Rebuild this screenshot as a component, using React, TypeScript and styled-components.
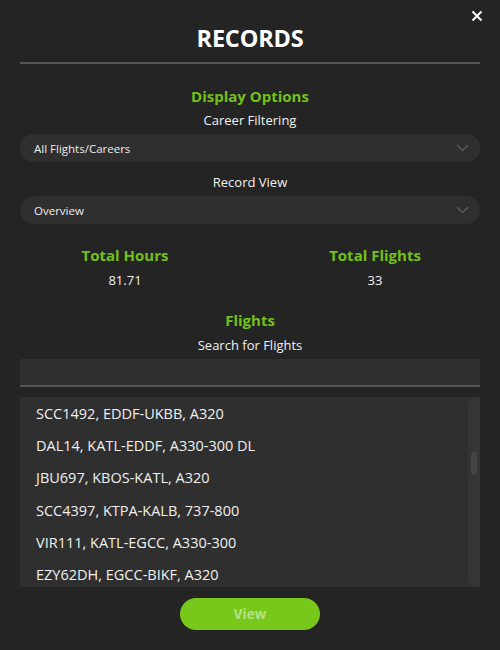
import React from "react";
import styled, { createGlobalStyle } from "styled-components";

const GlobalStyle = createGlobalStyle`
  html, body {
    margin: 0;
    padding: 0;
    background: #242424;
  }
  body {
    font-family: "Open Sans", "Noto Sans", sans-serif;
    color: #ececec;
  }
`;

const Page = styled.div`
  position: relative;
  width: 500px;
  height: 650px;
  box-sizing: border-box;
  padding: 23px 20px 0;
  background: #242424;
  display: flex;
  flex-direction: column;
`;

const CloseButton = styled.button`
  position: absolute;
  top: 9px;
  right: 16px;
  width: 14px;
  height: 14px;
  padding: 0;
  border: none;
  background: transparent;
  display: flex;
  align-items: center;
  justify-content: center;
  cursor: pointer;
`;

const Title = styled.h1`
  margin: 0;
  font-size: 23.5px;
  line-height: 30px;
  font-weight: 700;
  text-align: center;
  color: #ffffff;
  letter-spacing: -0.2px;
`;

const Divider = styled.hr`
  margin: 9px 0 0;
  border: none;
  height: 2px;
  background: #545454;
`;

const SectionTitle = styled.h2<{ $gap: number }>`
  margin: ${(p) => p.$gap}px 0 0;
  font-size: 15px;
  line-height: 20px;
  font-weight: 700;
  color: #72c11b;
  text-align: center;
`;

const Label = styled.div<{ $gap: number }>`
  margin-top: ${(p) => p.$gap}px;
  font-size: 13px;
  line-height: 18px;
  text-align: center;
  color: #f0f0f0;
`;

const SelectBox = styled.div`
  margin-top: 5px;
  height: 28px;
  border-radius: 14px;
  background: #2f2f2f;
  display: flex;
  align-items: center;
  justify-content: space-between;
  padding: 0 11px 0 14px;
  font-size: 11.5px;
  color: #ececec;
  cursor: pointer;
`;

const Stats = styled.div`
  margin: 21px -20px 0;
  display: grid;
  grid-template-columns: 1fr 1fr;
`;

const Stat = styled.div`
  display: flex;
  flex-direction: column;
  align-items: center;
`;

const StatLabel = styled.div`
  font-size: 15px;
  line-height: 20px;
  font-weight: 700;
  color: #72c11b;
`;

const StatValue = styled.div`
  margin-top: 6px;
  font-size: 13px;
  line-height: 18px;
  color: #f0f0f0;
`;

const SearchInput = styled.input`
  margin-top: 5px;
  height: 26px;
  box-sizing: content-box;
  padding: 0 14px;
  border: none;
  border-bottom: 2px solid #555555;
  background: #2f2f2f;
  color: #ececec;
  font-family: inherit;
  font-size: 13px;
  outline: none;
`;

const ListBox = styled.div`
  margin-top: 10px;
  height: 190px;
  background: #2f2f2f;
  display: flex;
`;

const Items = styled.ul`
  flex: 1;
  margin: 0;
  padding: 0;
  list-style: none;
  overflow: hidden;
`;

const Item = styled.li`
  height: 32.3px;
  display: flex;
  align-items: center;
  padding-left: 16px;
  font-size: 14.5px;
  color: #f0f0f0;
`;

const ScrollTrack = styled.div`
  width: 12px;
  border-radius: 6px;
  background: #353535;
  display: flex;
  justify-content: center;
`;

const ScrollThumb = styled.div`
  margin-top: 55px;
  width: 6px;
  height: 23px;
  border-radius: 3px;
  background: #444444;
`;

const ViewButton = styled.button`
  align-self: center;
  margin-top: 11px;
  width: 140px;
  height: 32px;
  border: none;
  border-radius: 16px;
  background: #77c81a;
  color: #b4e389;
  font-family: inherit;
  font-weight: 700;
  font-size: 13.5px;
`;

const Chevron = () => (
  <svg width="13" height="8" viewBox="0 0 13 8">
    <path d="M1 1.2 L6.5 6.5 L12 1.2" fill="none" stroke="#565656" strokeWidth="1.6" />
  </svg>
);

const flights = [
  "SCC1492, EDDF-UKBB, A320",
  "DAL14, KATL-EDDF, A330-300 DL",
  "JBU697, KBOS-KATL, A320",
  "SCC4397, KTPA-KALB, 737-800",
  "VIR111, KATL-EGCC, A330-300",
  "EZY62DH, EGCC-BIKF, A320",
];

export default function App() {
  return (
    <>
      <GlobalStyle />
      <Page>
        <CloseButton aria-label="Close">
          <svg width="12" height="12" viewBox="0 0 12 12">
            <path d="M1.5 1.5 L10.5 10.5 M10.5 1.5 L1.5 10.5" stroke="#ffffff" strokeWidth="2" />
          </svg>
        </CloseButton>
        <Title>RECORDS</Title>
        <Divider />

        <SectionTitle $gap={22}>Display Options</SectionTitle>
        <Label $gap={5}>Career Filtering</Label>
        <SelectBox>
          <span>All Flights/Careers</span>
          <Chevron />
        </SelectBox>
        <Label $gap={11}>Record View</Label>
        <SelectBox>
          <span>Overview</span>
          <Chevron />
        </SelectBox>

        <Stats>
          <Stat>
            <StatLabel>Total Hours</StatLabel>
            <StatValue>81.71</StatValue>
          </Stat>
          <Stat>
            <StatLabel>Total Flights</StatLabel>
            <StatValue>33</StatValue>
          </Stat>
        </Stats>

        <SectionTitle $gap={21}>Flights</SectionTitle>
        <Label $gap={6}>Search for Flights</Label>
        <SearchInput />

        <ListBox>
          <Items>
            {flights.map((f) => (
              <Item key={f}>{f}</Item>
            ))}
          </Items>
          <ScrollTrack>
            <ScrollThumb />
          </ScrollTrack>
        </ListBox>

        <ViewButton>View</ViewButton>
      </Page>
    </>
  );
}
